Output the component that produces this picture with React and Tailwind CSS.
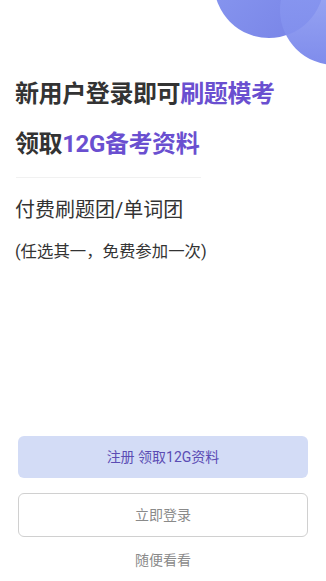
export default function App() {
  return (
    <div
      className="relative w-full h-[581px] overflow-hidden bg-white flex flex-col"
      style={{ fontFamily: 'Roboto, "Noto Sans CJK SC", sans-serif' }}
    >
      <div className="absolute left-[214px] top-[-72px] w-[110px] h-[110px] rounded-full bg-gradient-to-br from-[#8c9cf2] to-[#7782e6]" />
      <div className="absolute left-[280px] top-[-45px] w-[110px] h-[110px] rounded-full bg-gradient-to-b from-[#8e9ef3]/80 to-[#7f8cec]" />

      <div className="relative pl-[15px] pt-[69px]">
        <div className="text-[24px] leading-[50px] font-bold text-[#333333] tracking-[-0.4px]">
          新用户登录即可<span className="text-[#6a4fd0]">刷题模考</span>
        </div>
        <div className="text-[24px] leading-[50px] font-bold text-[#333333] tracking-[-0.4px]">
          领取<span className="text-[#6a4fd0]">12G备考资料</span>
        </div>
        <div className="mt-[8px] ml-px h-px w-[185px] bg-[#f1f1f1]" />
        <div className="mt-[18px] text-[20px] leading-[28px] text-[#333333]">付费刷题团/单词团</div>
        <div className="mt-[14px] text-[16.4px] leading-[28px] text-[#333333]">(任选其一，免费参加一次)</div>
      </div>

      <div className="mt-auto px-[18px] pb-[11px] flex flex-col">
        <div className="h-[42px] rounded-[6px] bg-[#d3dcf6] flex items-center justify-center text-[14px] text-[#5b4cb4]">
          注册 领取12G资料
        </div>
        <div className="mt-[15px] h-[44px] rounded-[6px] border border-[#d0d0d0] flex items-center justify-center text-[14px] text-[#8a8a8a]">
          立即登录
        </div>
        <div className="mt-[13px] h-[20px] leading-[20px] text-center text-[14px] text-[#8a8a8a]">随便看看</div>
      </div>
    </div>
  );
}
